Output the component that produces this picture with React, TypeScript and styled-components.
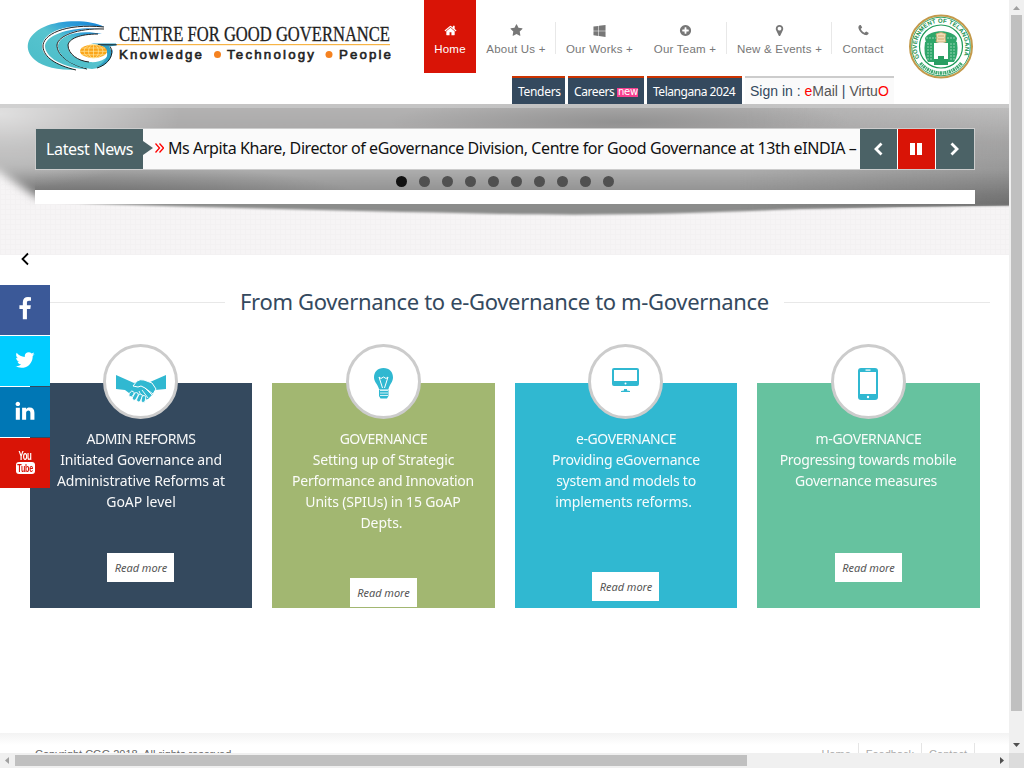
import React from "react";
import styled, { createGlobalStyle } from "styled-components";

const GlobalStyle = createGlobalStyle`
  * { box-sizing: border-box; }
  html, body { margin: 0; padding: 0; overflow: hidden; background: #fff; }
  button { font: inherit; border: 0; padding: 0; margin: 0; cursor: pointer; }
  a { color: inherit; text-decoration: none; }
`;

const droid = `"Droid Sans", "Noto Sans", sans-serif`;
const arial = `"Liberation Sans", Arial, sans-serif`;

/* ---------- frame ---------- */
const Frame = styled.div`
  display: grid;
  grid-template: 753px 15px / 1009px 15px;
  width: 1024px;
  height: 768px;
  overflow: hidden;
`;
const Page = styled.div`
  position: relative;
  display: flex;
  flex-direction: column;
  overflow: hidden;
  background: #fff;
  font-family: ${droid};
`;
const VTrack = styled.div`
  display: flex;
  flex-direction: column;
  align-items: center;
  background: #f0f0f0;
`;
const HTrack = styled.div`
  display: flex;
  align-items: center;
  background: #f0f0f0;
`;
const VThumb = styled.div`
  width: 11px;
  height: 696px;
  background: #c0c0c0;
`;
const HThumb = styled.div`
  width: 732px;
  height: 11px;
  background: #c0c0c0;
`;
const ScrollArrow = styled.svg`
  display: block;
  width: 15px;
  height: 15px;
  flex: none;
`;
const Spacer = styled.div`
  flex: 1;
`;
const Corner = styled.div`
  background: #dcdcdc;
`;

/* ---------- header ---------- */
const Header = styled.header`
  display: flex;
  flex: none;
  height: 104px;
  background: #fff;
`;
const LogoLink = styled.a`
  display: block;
  width: 396px;
  height: 104px;
  flex: none;
  svg { display: block; }
`;
const HeaderMain = styled.div`
  display: flex;
  flex-direction: column;
  align-items: flex-end;
  justify-content: space-between;
  width: 498px;
`;
const Nav = styled.nav`
  display: flex;
  height: 73px;
`;
const NavItem = styled.a<{ $w: number; $active?: boolean; $line?: boolean }>`
  position: relative;
  display: flex;
  flex-direction: column;
  align-items: center;
  width: ${(p) => p.$w}px;
  height: 73px;
  padding-top: 24px;
  font: 11.5px/15px ${arial};
  letter-spacing: 0.22px;
  white-space: nowrap;
  color: ${(p) => (p.$active ? "#fff" : "#777")};
  background: ${(p) => (p.$active ? "#d91406" : "transparent")};
  svg { display: block; width: 13px; height: 13px; margin-bottom: 5px; }
  &::after {
    content: "";
    position: absolute;
    top: 22px;
    right: 0;
    width: 1px;
    height: 32px;
    background: ${(p) => (p.$line ? "#e8e8e8" : "transparent")};
  }
`;
const QuickLinks = styled.div`
  display: flex;
  gap: 3px;
  height: 28px;
`;
const QuickLink = styled.a<{ $w: number; $ls?: number }>`
  display: flex;
  align-items: center;
  gap: 3px;
  width: ${(p) => p.$w}px;
  padding: 2px 0 0 6px;
  border-top: 2px solid #cc3300;
  background: #34495e;
  color: #fff;
  font-size: 12px;
  line-height: 16px;
  letter-spacing: ${(p) => p.$ls ?? -0.4}px;
  white-space: nowrap;
`;
const NewBadge = styled.span`
  width: 21px;
  height: 9px;
  margin-top: 1px;
  background: #f6408f;
  color: #fff;
  font: 10px/8px "DejaVu Sans", sans-serif;
  letter-spacing: -0.2px;
  text-align: center;
`;
const SignIn = styled.div`
  width: 149px;
  padding: 4px 0 0 5px;
  border-top: 2px solid #ccc;
  background: #fafafa;
  font: 14px/18px ${arial};
  letter-spacing: 0;
  white-space: nowrap;
  color: #34495e;
  a { color: #555; }
  em { font-style: normal; color: #f00; }
`;
const Seal = styled.svg`
  display: block;
  width: 66px;
  height: 66px;
  margin: 14px 0 0 14px;
`;

/* ---------- banner ---------- */
const Banner = styled.section`
  position: relative;
  flex: none;
  display: flex;
  flex-direction: column;
  height: 151px;
  padding: 24px 34px 0 35px;
`;
const BannerArt = styled.svg`
  position: absolute;
  inset: 0;
  z-index: 0;
`;
const Ticker = styled.div`
  position: relative;
  z-index: 1;
  display: flex;
  height: 42px;
  border: 1px solid #ccc;
  background: #fafafa;
`;
const TickerLabel = styled.div`
  position: relative;
  width: 107px;
  padding-left: 10px;
  background: #4b6266;
  color: #fff;
  font-size: 16px;
  line-height: 40px;
  letter-spacing: -0.34px;
  white-space: nowrap;
  &::after {
    content: "";
    position: absolute;
    left: 107px;
    top: 12px;
    border: solid transparent;
    border-width: 7px 0 7px 10px;
    border-left-color: #4b6266;
  }
`;
const TickerText = styled.div`
  display: flex;
  align-items: center;
  width: 717px;
  padding: 0 0 2px 12px;
  overflow: hidden;
  color: #111;
  font-size: 16px;
  line-height: 38px;
  letter-spacing: -0.41px;
  white-space: nowrap;
  svg { flex: none; margin-right: 4px; }
`;
const TickerControls = styled.div`
  display: flex;
  gap: 1px;
  background: #fff;
`;
const TickerButton = styled.button<{ $w: number; $red?: boolean }>`
  display: flex;
  align-items: center;
  justify-content: center;
  width: ${(p) => p.$w}px;
  height: 40px;
  padding-right: 1px;
  background: ${(p) => (p.$red ? "#d91406" : "#4b6266")};
`;
const Dots = styled.div`
  position: relative;
  z-index: 1;
  display: flex;
  gap: 12px;
  height: 20px;
  padding: 6px 0 0 361px;
`;
const Dot = styled.span<{ $on?: boolean }>`
  width: 11px;
  height: 11px;
  border-radius: 50%;
  background: ${(p) => (p.$on ? "#111" : "#505050")};
`;
const SlideStrip = styled.div`
  position: relative;
  z-index: 1;
  height: 14px;
  background: #fff;
`;

/* ---------- social ---------- */
const SocialBar = styled.aside`
  position: absolute;
  z-index: 3;
  left: 0;
  top: 251px;
  width: 50px;
`;
const SlideArrow = styled.svg`
  display: block;
  margin: 0 0 18px 20px;
`;
const SocialLink = styled.a<{ $bg: string }>`
  display: flex;
  flex-direction: column;
  align-items: center;
  justify-content: center;
  height: 50px;
  margin-bottom: 1px;
  padding-bottom: 2px;
  background: ${(p) => p.$bg};
  color: #fff;
`;
const YouText = styled.span`
  font: bold 12px/11px ${arial};
  letter-spacing: -0.6px;
  transform: scaleX(0.65);
`;
const TubeText = styled.span`
  display: flex;
  justify-content: center;
  width: 19px;
  height: 12px;
  border-radius: 3px;
  background: #fff;
  color: #d91406;
  span { font: bold 11px/12px ${arial}; letter-spacing: -0.3px; transform: scaleX(0.65); }
`;

/* ---------- features ---------- */
const Title = styled.h2`
  display: flex;
  align-items: center;
  gap: 15px;
  height: 34px;
  margin: 30px 19px 0 30px;
  color: #34495e;
  font-size: 22px;
  font-weight: 400;
  line-height: 32px;
  letter-spacing: -0.33px;
  white-space: nowrap;
  span { width: 529px; height: 34px; flex: none; }
  &::before { content: ""; width: 195px; height: 1px; background: #e8e8e8; }
  &::after { content: ""; width: 206px; height: 1px; background: #e8e8e8; }
`;
const Cards = styled.div`
  display: grid;
  grid-template-columns: 222px 223px 222px 223px;
  gap: 20px;
  width: 950px;
  margin: 64px 0 0 30px;
`;
const Card = styled.article<{ $bg: string }>`
  display: flex;
  flex-direction: column;
  align-items: center;
  height: 225px;
  background: ${(p) => p.$bg};
  color: #fff;
`;
const Circle = styled.div`
  flex: none;
  width: 75px;
  height: 75px;
  margin: -39px 1px 0 0;
  border: 3px solid #ccc;
  border-radius: 50%;
  background: #fff;
  svg { display: block; }
`;
const CardLine = styled.div<{ $ls: number; $shift?: number }>`
  font-size: 14px;
  line-height: 21px;
  letter-spacing: ${(p) => p.$ls}px;
  margin-right: ${(p) => p.$shift ?? 0}px;
  white-space: nowrap;
  opacity: 0.96;
`;
const CardText = styled.div<{ $h: number }>`
  display: flex;
  flex-direction: column;
  align-items: center;
  flex: none;
  height: ${(p) => p.$h}px;
  padding-top: 9px;
`;
const ReadMore = styled.a`
  width: 67px;
  height: 29px;
  flex: none;
  margin-right: 1px;
  padding-left: 1px;
  background: #fff;
  color: #555;
  font-size: 11px;
  font-style: italic;
  line-height: 30px;
  letter-spacing: -0.05px;
  text-align: center;
  white-space: nowrap;
`;

/* ---------- footer ---------- */
const Footer = styled.footer`
  display: flex;
  flex: none;
  justify-content: space-between;
  height: 60px;
  margin-top: 125px;
  padding: 10px 34px 0 35px;
  background: linear-gradient(#f3f3f3, #fff 12px);
  font: 11px/22px ${arial};
  color: #666;
`;
const FooterLinks = styled.div`
  display: flex;
  height: 30px;
  color: #aaa;
  a { padding: 0 7px; border-right: 1px solid #e5e5e5; }
`;

const Fa = ({ d, size = 13 }: { d: string; size?: number }) => (
  <svg width={size} height={size} viewBox="0 0 1792 1792" fill="currentColor">
    <path d={d} />
  </svg>
);

const icons = {
  home: "M1472 992v480q0 26-19 45t-45 19h-384v-384h-256v384h-384q-26 0-45-19t-19-45v-480q0-1 .5-3t.5-3l575-474 575 474q1 2 1 6zm223-69l-62 74q-8 9-21 11h-3q-13 0-21-7l-692-577-692 577q-12 8-24 7-13-2-21-11l-62-74q-8-10-7-23.5t11-21.5l719-599q32-26 76-26t76 26l244 204v-195q0-14 9-23t23-9h192q14 0 23 9t9 23v408l219 182q10 8 11 21.5t-7 23.5z",
  star: "M1728 647q0 22-26 48l-363 354 86 500q1 7 1 20 0 21-10.5 35.5t-30.5 14.5q-19 0-40-12l-449-236-449 236q-22 12-40 12-21 0-31.5-14.5t-10.5-35.5q0-6 2-20l86-500-364-354q-25-27-25-48 0-37 56-46l502-73 225-455q19-41 49-41t49 41l225 455 502 73q56 9 56 46z",
  windows: "M746 1006v651l-682-94v-557h682zm0-743v659h-682v-565zm982 743v786l-907-125v-661h907zm0-878v794h-907v-669z",
  plus: "M1344 960v-128q0-26-19-45t-45-19h-256v-256q0-26-19-45t-45-19h-128q-26 0-45 19t-19 45v256h-256q-26 0-45 19t-19 45v128q0 26 19 45t45 19h256v256q0 26 19 45t45 19h128q26 0 45-19t19-45v-256h256q26 0 45-19t19-45zm320-64q0 209-103 385.5t-279.5 279.5-385.5 103-385.5-103-279.5-279.5-103-385.5 103-385.5 279.5-279.5 385.5-103 385.5 103 279.5 279.5 103 385.5z",
  marker: "M1152 640q0-106-75-181t-181-75-181 75-75 181 75 181 181 75 181-75 75-181zm256 0q0 109-33 179l-364 774q-16 33-47.5 52t-67.5 19-67.5-19-46.5-52l-365-774q-33-70-33-179 0-212 150-362t362-150 362 150 150 362z",
  phone: "M1600 1240q0 27-10 70.5t-21 68.5q-21 50-122 106-94 51-186 51-27 0-53-3.5t-57.5-12.5-47-14.5-55.5-20.5-49-18q-98-35-175-83-127-79-264-216t-216-264q-48-77-83-175-3-9-18-49t-20.5-55.5-14.5-47-12.5-57.5-3.5-53q0-92 51-186 56-101 106-122 25-11 68.5-21t70.5-10q14 0 21 3 18 6 53 76 11 19 30 54t35 63.5 31 53.5q3 4 17.5 25t21.5 35.5 7 28.5q0 20-28.5 50t-62 55-62 53-28.5 46q0 9 5 22.5t8.5 20.5 14 24 11.5 19q76 137 174 235t235 174q2 1 19 11.5t24 14 20.5 8.5 22.5 5q18 0 46-28.5t53-62 55-62 50-28.5q14 0 28.5 7t35.5 21.5 25 17.5q25 15 53.5 31t63.5 35 54 30q70 35 76 53 3 7 3 21z",
  facebook: "M1343 12v264h-157q-86 0-116 36t-30 108v189h293l-39 296h-254v759h-306v-759h-255v-296h255v-218q0-186 104-288.5t277-102.5q147 0 228 12z",
  twitter: "M1684 408q-67 98-162 167 1 14 1 42 0 130-38 259.5t-115.5 248.5-184.5 210.5-258 146-323 54.5q-271 0-496-145 35 4 78 4 225 0 401-138-105-2-188-64.5t-114-159.5q33 5 61 5 43 0 85-11-112-23-185.5-111.5t-73.5-205.5v-4q68 38 146 41-66-44-105-115t-39-154q0-88 44-163 121 149 294.5 238.5t371.5 99.5q-8-38-8-74 0-134 94.5-228.5t228.5-94.5q140 0 236 102 109-21 205-78-37 115-142 178 93-10 186-50z",
  linkedin: "M477 625v991h-330v-991h330zm21-306q1 73-50.5 122t-135.5 49h-2q-82 0-132-49t-50-122q0-74 51.5-122.5t134.5-48.5 133 48.5 51 122.5zm1166 729v568h-329v-530q0-105-40.5-164.5t-126.5-59.5q-63 0-105.5 34.5t-63.5 85.5q-11 30-11 81v553h-329q2-399 2-647t-1-296l-1-48h329v144h-2q20-32 41-56t56.5-52 87-43.5 114.5-15.5q171 0 275 113.5t104 332.5z",
};

const Logo = () => (
  <svg width="396" height="104" viewBox="0 0 396 104">
    <defs>
      <linearGradient id="swoosh" x1="1" y1="0" x2="0.2" y2="0.8">
        <stop offset="0" stopColor="#1583d8" />
        <stop offset="0.35" stopColor="#2f9fd8" />
        <stop offset="0.6" stopColor="#57c4cf" />
        <stop offset="1" stopColor="#4fbfca" />
      </linearGradient>
    </defs>
    <path d="M104 27C92 20 62 19 44 27C26 35 23 50 35 60C43 67 58 70 76 70C56 65 43 57 42 47C42 34 62 22 104 27Z" fill="url(#swoosh)" />
    <path d="M104 27C64 23 42 35 43 47C44 57 55 65 76 70" fill="none" stroke="#222" strokeWidth="1" />
    <path d="M104 29C74 26 46 34 45 46C45 57 62 68 88 69.500C66 63 56 53 57 45C59 35 76 27 104 29Z" fill="url(#swoosh)" />
    <path d="M104 29C77 28 58 36 57 45C57 54 66 63 87 69" fill="none" stroke="#222" strokeWidth="1" />
    <path d="M102 34C79 29 60 35 58 45C57 55 71 67 92 69C105 68 112 60 113 49C109 58 100 63 90 62C77 61 67 53 68 45C69 39 79 33 102 34Z" fill="url(#swoosh)" />
    <path d="M98 34C79 34 69 39 68 45C68 54 78 61 89 62" fill="none" stroke="#222" strokeWidth="1" />
    <path d="M91 43.500H116L116 45.500L109 46.500C115 53 110 65 96 67C107 62 111 53 103 46.500C99 44.500 94 44 91 43.500Z" fill="#2f9fc4" />
    <path d="M98 44.800H117M110 46.500C115 54 109 64 97 68" stroke="#222" strokeWidth="1" fill="none" />
    <ellipse cx="93.500" cy="51.300" rx="13.500" ry="6.800" fill="#fba519" />
    <g fill="none" stroke="#fff0b0" strokeWidth="0.600">
      <path d="M80 51.300H107M82 48H105M82 54.800H105M93.500 44.500V58" />
      <ellipse cx="93.500" cy="51.300" rx="5" ry="6.800" />
      <ellipse cx="93.500" cy="51.300" rx="9.500" ry="6.800" />
    </g>
    <text x="119" y="41" fontFamily="Liberation Serif, serif" fontSize="21.500" textLength="271" lengthAdjust="spacingAndGlyphs" fill="#222" stroke="#222" strokeWidth="0.300">CENTRE FOR GOOD GOVERNANCE</text>
    <rect x="117" y="44" width="273" height="1.200" fill="#f7b445" />
    <g fontFamily="Liberation Sans, sans-serif" fontWeight="400" fontSize="13.300" fill="#222" stroke="#222" strokeWidth="0.600">
      <text x="119" y="58.500" textLength="83">Knowledge</text>
      <text x="227" y="58.500" textLength="87">Technology</text>
      <text x="339" y="58.500" textLength="52">People</text>
    </g>
    <circle cx="217.500" cy="54.500" r="3.500" fill="#f58220" />
    <circle cx="329" cy="54.500" r="3.500" fill="#f58220" />
  </svg>
);

const StateSeal = () => (
  <Seal viewBox="0 0 66 66">
    <defs>
      <path id="sealTop" d="M11.500 44A24.200 24.200 0 1 1 54.500 44" />
    </defs>
    <circle cx="33" cy="32.500" r="31" fill="#fff" stroke="#c39a4b" strokeWidth="2" />
    <circle cx="33" cy="32.500" r="29.300" fill="none" stroke="#1d9a58" strokeWidth="0.900" />
    <circle cx="33" cy="32.500" r="21.500" fill="#fff" stroke="#1d9a58" strokeWidth="1.200" />
    <text fontFamily="Liberation Sans, sans-serif" fontWeight="700" fontSize="6" fill="#16904e">
      <textPath href="#sealTop" textLength="96">GOVERNMENT OF TELANGANA</textPath>
    </text>
    <path d="M12.500 49A26 26 0 0 0 53.500 49" fill="none" stroke="#3fa871" strokeWidth="3.500" strokeDasharray="2 .7 1.200 .6" />
    <path d="M17 24C22 15 44 15 49 24L48 29H18Z" fill="#2fa66a" />
    <path d="M17 28H26V48H20Q15 41 17 28ZM40 28H49Q51 41 46 48H40Z" fill="#2fa66a" />
    <path d="M20 29V46M23 29V47M43 29V47M46 29V46M18 24H48" stroke="#c3e6d2" strokeWidth="0.700" strokeDasharray="2 1" />
    <path d="M26 45V31Q33 24 40 31V45" fill="#fff" />
    <path d="M26 45H30V42H36V45H40V51H26Z" fill="#299e62" />
    <path d="M28 20Q33 17 38 20L37 24L38 28H28L29 24Z" fill="#f1dcb8" stroke="#cda467" strokeWidth="0.800" />
    <path d="M30 22H36M30 25H36" stroke="#c99b57" strokeWidth="0.800" />
  </Seal>
);

const BannerBackdrop = () => (
  <BannerArt width="1009" height="151" viewBox="0 0 1009 151">
    <defs>
      <pattern id="weave" width="5" height="5" patternUnits="userSpaceOnUse">
        <rect width="5" height="5" fill="#f6f4f5" />
        <path d="M0 .5H5M.5 0V5" stroke="#f3f1f2" strokeWidth="1" />
      </pattern>
      <linearGradient id="steel" gradientUnits="userSpaceOnUse" x1="0" y1="0" x2="0" y2="110">
        <stop offset="0" stopColor="#b4b3b3" />
        <stop offset="0.350" stopColor="#a6a5a5" />
        <stop offset="0.600" stopColor="#adadad" />
        <stop offset="0.830" stopColor="#8d8d8d" />
        <stop offset="1" stopColor="#8a8b8a" />
      </linearGradient>
      <radialGradient id="glow" gradientUnits="userSpaceOnUse" cx="0" cy="0" r="1" gradientTransform="translate(0 10) scale(180 75)">
        <stop offset="0" stopColor="#fff" stopOpacity="0.600" />
        <stop offset="1" stopColor="#fff" stopOpacity="0" />
      </radialGradient>
      <radialGradient id="shade" gradientUnits="userSpaceOnUse" cx="0" cy="0" r="1" gradientTransform="translate(620 18) scale(230 26)">
        <stop offset="0" stopColor="#777" stopOpacity="0.500" />
        <stop offset="1" stopColor="#777" stopOpacity="0" />
      </radialGradient>
      <radialGradient id="shadeLeft" gradientUnits="userSpaceOnUse" cx="0" cy="0" r="1" gradientTransform="translate(90 98) scale(280 38)">
        <stop offset="0" stopColor="#484848" stopOpacity="0.550" />
        <stop offset="1" stopColor="#484848" stopOpacity="0" />
      </radialGradient>
      <linearGradient id="shadeRight" x1="0" y1="0" x2="0" y2="1">
        <stop offset="0" stopColor="#ccc" stopOpacity="0.500" />
        <stop offset="0.450" stopColor="#999" stopOpacity="0.500" />
        <stop offset="1" stopColor="#606060" stopOpacity="0.800" />
      </linearGradient>
      <linearGradient id="fadeIn" x1="0" y1="0" x2="1" y2="0">
        <stop offset="0" stopColor="#000" />
        <stop offset="1" stopColor="#fff" />
      </linearGradient>
      <mask id="rightMask"><rect x="740" width="269" height="151" fill="url(#fadeIn)" /></mask>
      <filter id="soft" filterUnits="userSpaceOnUse" x="-60" y="-60" width="240" height="240"><feGaussianBlur stdDeviation="5 4" /></filter>
      <filter id="edge" x="-5%" y="-20%" width="110%" height="140%"><feGaussianBlur stdDeviation="1.200" /></filter>
      <clipPath id="left"><rect width="35" height="151" /></clipPath>
      <clipPath id="rest"><rect x="35" width="974" height="151" /></clipPath>
    </defs>
    <rect width="1009" height="151" fill="url(#weave)" />
    <g clipPath="url(#left)">
      <g filter="url(#soft)">
        <path d="M-50 -50H120V135L35 92L0 68L-50 45Z" fill="url(#steel)" />
        <path d="M-50 -50H120V135L35 92L0 68L-50 45Z" fill="url(#shadeLeft)" />
      </g>
    </g>
    <g clipPath="url(#rest)">
      <path d="M0 -10H1020V101.500L900 103L800 105C700 109 620 112 500 110C350 107 230 104 100 100L35 97H0Z" fill="url(#steel)" filter="url(#edge)" />
      <g mask="url(#rightMask)"><path d="M740 0H1009V101.500L900 103L800 105L740 107Z" fill="url(#shadeRight)" /></g>
      <path d="M35 0H390V97H35Z" fill="url(#shadeLeft)" />
    </g>
    <ellipse cx="620" cy="18" rx="230" ry="26" fill="url(#shade)" />
    <rect width="300" height="151" fill="url(#glow)" />
    <rect width="1009" height="4" fill="#ccc" opacity="0.700" />
  </BannerArt>
);

const teal = "#30b8d1";
const HandshakeIcon = () => (
  <svg width="69" height="69" viewBox="0 0 69 69">
    <path d="M10 28L28 36L34 34L44 35L60 28V42L49 43L47 47L42 52L34 54L27 51L23 46L19 43L10 42Z" fill={teal} />
    <path d="M27 39L31 34Q34 32 38 33L46 36L50 42L47 47L39 41L35 39L32 40Z" fill={teal} stroke="#fff" strokeWidth="1" />
    <path d="M39 41L46 48M36 43L42 51M33 44L37 53" stroke="#fff" strokeWidth="0.900" />
    <g stroke="#fff" strokeWidth="0.900" fill={teal}>
      <rect x="23.500" y="44" width="4" height="6" rx="2" transform="rotate(35 25.500 47)" />
      <rect x="27.500" y="45.500" width="4" height="8" rx="2" transform="rotate(30 29.500 49)" />
      <rect x="31.500" y="47" width="4" height="8" rx="2" transform="rotate(25 33.500 51)" />
      <rect x="35.500" y="48.500" width="4" height="7" rx="2" transform="rotate(12 37.500 52)" />
    </g>
  </svg>
);
const BulbIcon = () => (
  <svg width="69" height="69" viewBox="0 0 69 69">
    <path d="M34.500 21C28.500 21 25 25 25 30.500C25 35 29 37.500 30 42H39.500C40.500 37.500 44 35 44 30.500C44 25 40.500 21 34.500 21Z" fill={teal} />
    <path d="M33.500 41L30 30L32 31.500L34.500 30L37 31.500L39 30L35.500 41" fill="none" stroke="#fff" strokeWidth="1" />
    <path d="M30 42.500H39.500V49L38 51.500H31.500L30 49Z" fill={teal} />
    <path d="M31 43.500H39M31 46H39M31 48.500H39" stroke="#fff" strokeWidth="0.800" />
  </svg>
);
const MonitorIcon = () => (
  <svg width="69" height="69" viewBox="0 0 69 69">
    <rect x="21" y="21" width="27" height="18" rx="2" fill={teal} />
    <rect x="23" y="23" width="23" height="11" fill="#fff" />
    <circle cx="34.500" cy="36.500" r="1" fill="#fff" />
    <path d="M33 42H36V43.500L39 44V45H30V44L33 43.500Z" fill={teal} />
  </svg>
);
const PhoneIcon = () => (
  <svg width="69" height="69" viewBox="0 0 69 69">
    <rect x="24" y="21" width="20" height="32" rx="3" fill={teal} />
    <rect x="26" y="25" width="16" height="22" fill="#fff" />
    <rect x="31.500" y="22.500" width="5" height="1.200" fill="#fff" />
    <circle cx="34" cy="50" r="1.200" fill="#fff" />
  </svg>
);

type Line = { t: string; ls: number; shift?: number };
const cards: { bg: string; icon: React.ReactNode; h: number; lines: Line[] }[] = [
  {
    bg: "#34495e", icon: <HandshakeIcon />, h: 134,
    lines: [
      { t: "ADMIN REFORMS", ls: -0.42 },
      { t: "Initiated Governance and", ls: -0.2 },
      { t: "Administrative Reforms at", ls: -0.12 },
      { t: "GoAP level", ls: 0 },
    ],
  },
  {
    bg: "#a2b771", icon: <BulbIcon />, h: 159,
    lines: [
      { t: "GOVERNANCE", ls: -0.5 },
      { t: "Setting up of Strategic", ls: -0.2 },
      { t: "Performance and Innovation", ls: -0.27, shift: 1 },
      { t: "Units (SPIUs) in 15 GoAP", ls: -0.17, shift: 1 },
      { t: "Depts.", ls: 0, shift: 4 },
    ],
  },
  {
    bg: "#30b8d1", icon: <MonitorIcon />, h: 153,
    lines: [
      { t: "e-GOVERNANCE", ls: -0.43 },
      { t: "Providing eGovernance", ls: -0.24 },
      { t: "system and models to", ls: -0.24 },
      { t: "implements reforms.", ls: -0.06, shift: 5 },
    ],
  },
  {
    bg: "#66c29f", icon: <PhoneIcon />, h: 134,
    lines: [
      { t: "m-GOVERNANCE", ls: -0.37 },
      { t: "Progressing towards mobile", ls: -0.29, shift: 1 },
      { t: "Governance measures", ls: -0.26, shift: 5 },
    ],
  },
];

const nav = [
  { label: "Home", icon: icons.home, w: 52, active: true },
  { label: "About Us +", icon: icons.star, w: 80, line: true },
  { label: "Our Works +", icon: icons.windows, w: 87 },
  { label: "Our Team +", icon: icons.plus, w: 84, line: true },
  { label: "New & Events +", icon: icons.marker, w: 105, line: true },
  { label: "Contact", icon: icons.phone, w: 62 },
];

export default function App() {
  return (
    <>
      <GlobalStyle />
      <Frame>
        <Page>
          <Header>
            <LogoLink href="#"><Logo /></LogoLink>
            <HeaderMain>
              <Nav>
                {nav.map((n) => (
                  <NavItem key={n.label} href="#" $w={n.w} $active={n.active} $line={n.line}>
                    <Fa d={n.icon} />
                    {n.label}
                  </NavItem>
                ))}
              </Nav>
              <QuickLinks>
                <QuickLink href="#" $w={53} $ls={-0.3}>Tenders</QuickLink>
                <QuickLink href="#" $w={76}>Careers <NewBadge>new</NewBadge></QuickLink>
                <QuickLink href="#" $w={95} $ls={-0.46}>Telangana 2024</QuickLink>
                <SignIn>
                  Sign in : <a href="#"><em>e</em>Mail</a> | <a href="#">Virtu<em>O</em></a>
                </SignIn>
              </QuickLinks>
            </HeaderMain>
            <StateSeal />
          </Header>

          <Banner>
            <BannerBackdrop />
            <Ticker>
              <TickerLabel>Latest News</TickerLabel>
              <TickerText>
                <svg width="9" height="10" viewBox="0 0 9 10" fill="none" stroke="#f00" strokeWidth="1.300">
                  <path d="M.5 .5L4.500 5L.5 9.500M4.500 .5L8.500 5L4.500 9.500" />
                </svg>
                Ms Arpita Khare, Director of eGovernance Division, Centre for Good Governance at 13th eINDIA –
              </TickerText>
              <TickerControls>
                <TickerButton $w={37} aria-label="Previous">
                  <svg width="12" height="14" viewBox="0 0 12 14" fill="none" stroke="#fff" strokeWidth="2.800"><path d="M9.500 1.500L4 7L9.500 12.500" /></svg>
                </TickerButton>
                <TickerButton $w={37} $red aria-label="Pause">
                  <svg width="12" height="12" viewBox="0 0 12 12" fill="#fff"><path d="M0 0H5V12H0ZM7 0H12V12H7Z" /></svg>
                </TickerButton>
                <TickerButton $w={38} aria-label="Next">
                  <svg width="12" height="14" viewBox="0 0 12 14" fill="none" stroke="#fff" strokeWidth="2.800"><path d="M2.500 1.500L8 7L2.500 12.500" /></svg>
                </TickerButton>
              </TickerControls>
            </Ticker>
            <Dots>
              {Array.from({ length: 10 }, (_, i) => <Dot key={i} $on={i === 0} />)}
            </Dots>
            <SlideStrip />
          </Banner>

          <Title><span>From Governance to e-Governance to m-Governance</span></Title>
          <Cards>
            {cards.map((c) => (
              <Card key={c.bg} $bg={c.bg}>
                <Circle>{c.icon}</Circle>
                <CardText $h={c.h}>
                  {c.lines.map((l) => (
                    <CardLine key={l.t} $ls={l.ls} $shift={l.shift}>{l.t}</CardLine>
                  ))}
                </CardText>
                <ReadMore href="#">Read more</ReadMore>
              </Card>
            ))}
          </Cards>
          <Footer>
            <span>Copyright CGG 2018. All rights reserved</span>
            <FooterLinks>
              <a href="#">Home</a><a href="#">Feedback</a><a href="#">Contact</a>
            </FooterLinks>
          </Footer>

          <SocialBar>
            <SlideArrow width="10" height="16" viewBox="0 0 10 16" fill="none" stroke="#000" strokeWidth="1.800"><path d="M8 2.500L2.500 8L8 13.500" /></SlideArrow>
            <SocialLink href="#" $bg="#3b5998"><Fa d={icons.facebook} size={24} /></SocialLink>
            <SocialLink href="#" $bg="#00ccff"><Fa d={icons.twitter} size={22} /></SocialLink>
            <SocialLink href="#" $bg="#0077b5"><Fa d={icons.linkedin} size={22} /></SocialLink>
            <SocialLink href="#" $bg="#d91406">
              <YouText>You</YouText>
              <TubeText><span>Tube</span></TubeText>
            </SocialLink>
          </SocialBar>
        </Page>
        <VTrack>
          <ScrollArrow viewBox="0 0 15 15"><path d="M4 10L7.500 6L11 10Z" fill="#a0a0a0" /></ScrollArrow>
          <VThumb />
          <Spacer />
          <ScrollArrow viewBox="0 0 15 15"><path d="M4 5L7.500 9L11 5Z" fill="#505050" /></ScrollArrow>
        </VTrack>
        <HTrack>
          <ScrollArrow viewBox="0 0 15 15"><path d="M9 4L5 7.500L9 11Z" fill="#a0a0a0" /></ScrollArrow>
          <HThumb />
          <Spacer />
          <ScrollArrow viewBox="0 0 15 15"><path d="M6 4L10 7.500L6 11Z" fill="#505050" /></ScrollArrow>
        </HTrack>
        <Corner />
      </Frame>
    </>
  );
}
